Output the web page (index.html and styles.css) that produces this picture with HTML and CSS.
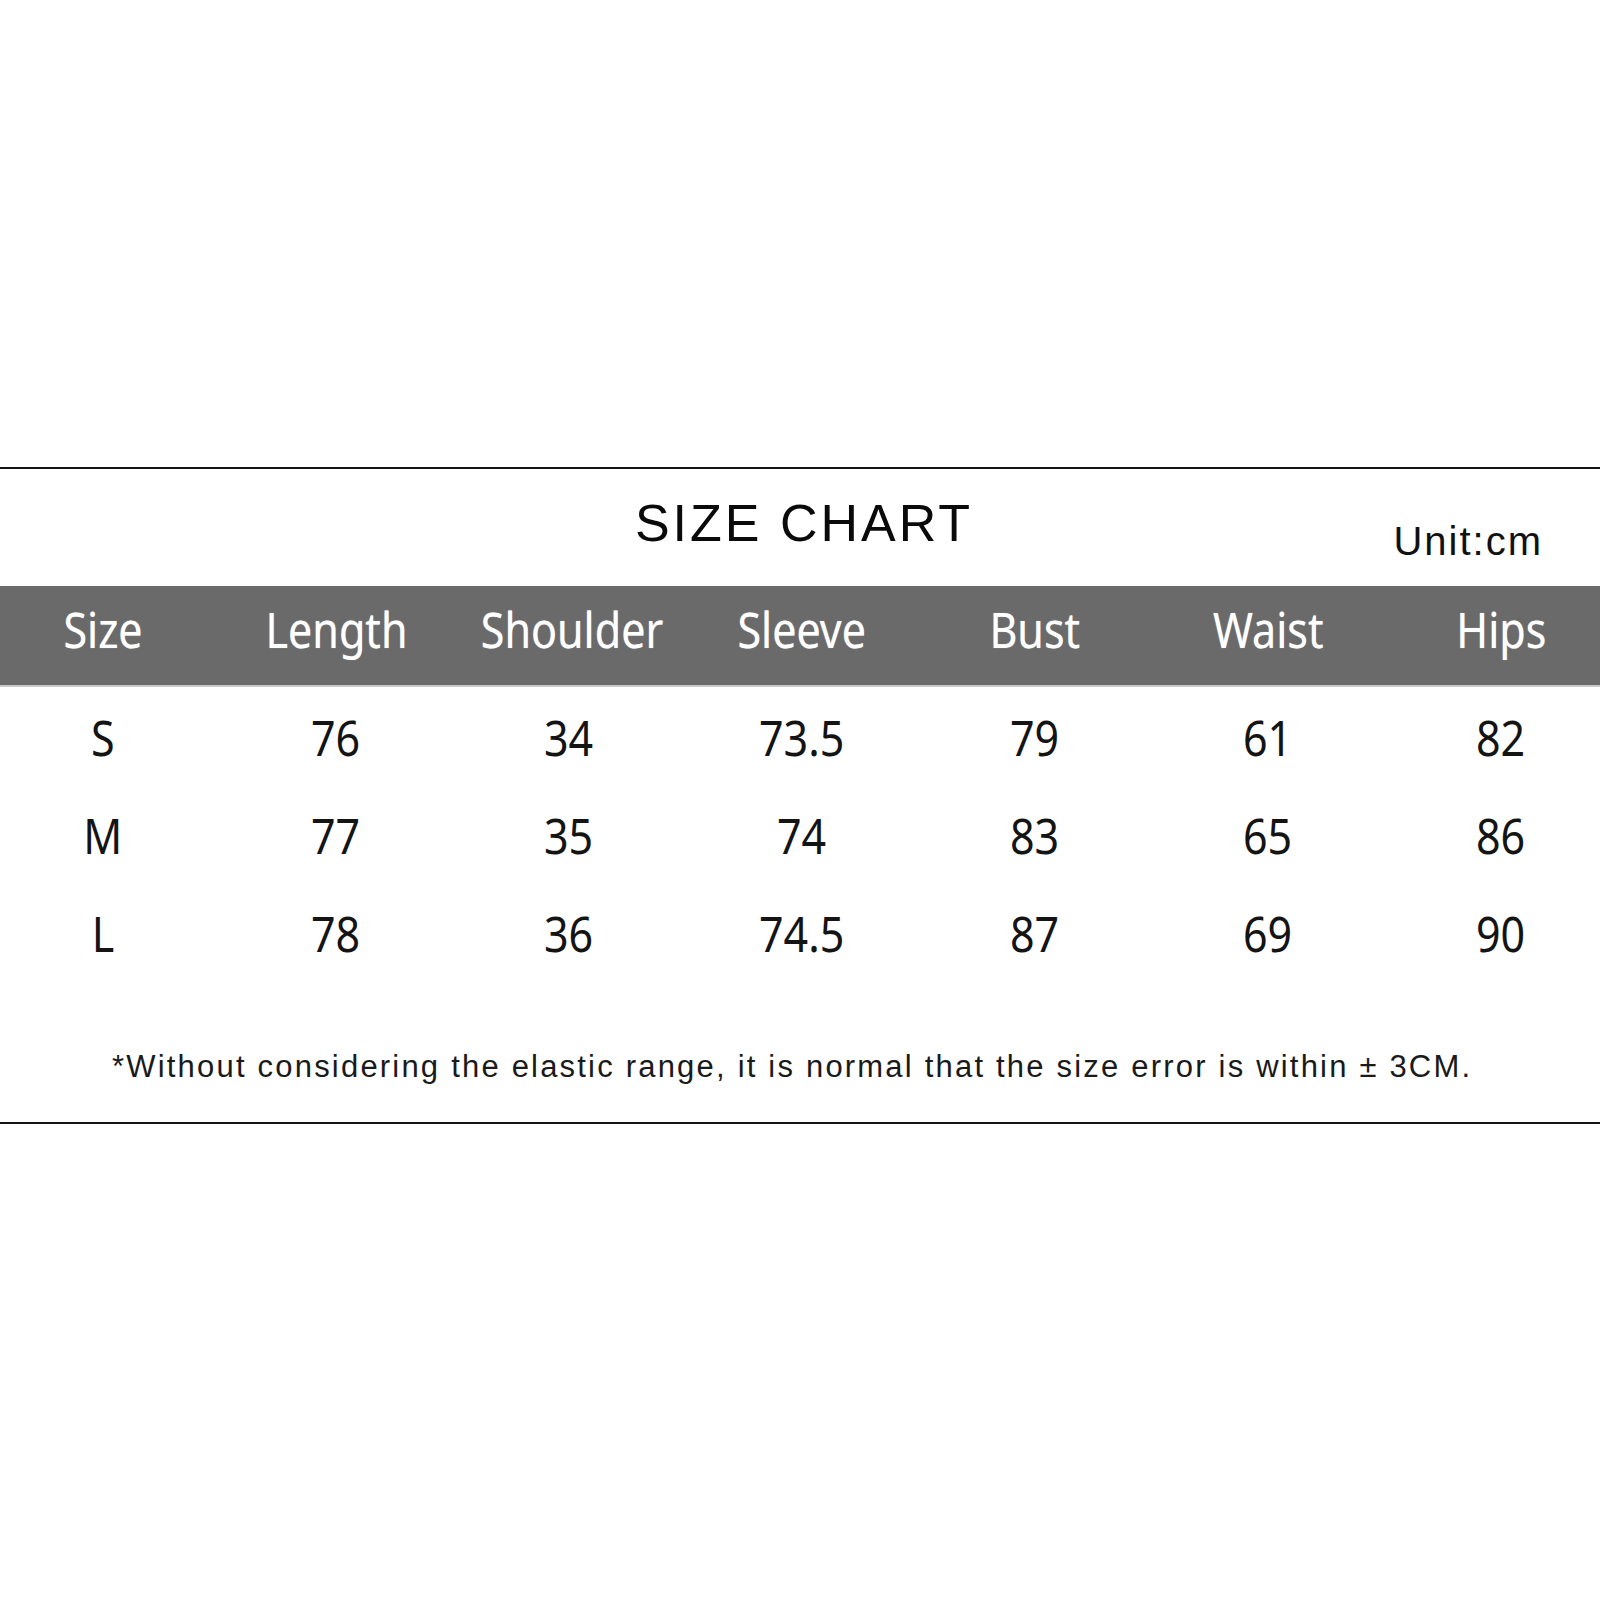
FILE: index.html
```html
<!DOCTYPE html>
<html lang="en">
<head>
<meta charset="utf-8">
<title>Size Chart</title>
<link rel="stylesheet" href="styles.css">
</head>
<body>
<div class="chart">
  <div class="rule"></div>
  <div class="title-row">
    <div></div>
    <h1 class="title">SIZE CHART</h1>
    <div class="unit">Unit:cm</div>
  </div>
  <div class="row head">
    <div class="cell"><span>Size</span></div>
    <div class="cell"><span>Length</span></div>
    <div class="cell"><span>Shoulder</span></div>
    <div class="cell"><span>Sleeve</span></div>
    <div class="cell"><span>Bust</span></div>
    <div class="cell"><span>Waist</span></div>
    <div class="cell"><span>Hips</span></div>
  </div>
  <div class="body">
    <div class="row">
      <div class="cell"><span>S</span></div>
      <div class="cell"><span>76</span></div>
      <div class="cell"><span>34</span></div>
      <div class="cell"><span>73.5</span></div>
      <div class="cell"><span>79</span></div>
      <div class="cell"><span>61</span></div>
      <div class="cell"><span>82</span></div>
    </div>
    <div class="row">
      <div class="cell"><span>M</span></div>
      <div class="cell"><span>77</span></div>
      <div class="cell"><span>35</span></div>
      <div class="cell"><span>74</span></div>
      <div class="cell"><span>83</span></div>
      <div class="cell"><span>65</span></div>
      <div class="cell"><span>86</span></div>
    </div>
    <div class="row">
      <div class="cell"><span>L</span></div>
      <div class="cell"><span>78</span></div>
      <div class="cell"><span>36</span></div>
      <div class="cell"><span>74.5</span></div>
      <div class="cell"><span>87</span></div>
      <div class="cell"><span>69</span></div>
      <div class="cell"><span>90</span></div>
    </div>
  </div>
  <p class="note">*Without considering the elastic range, it is normal that the size error is within ± 3CM.</p>
  <div class="rule"></div>
</div>
</body>
</html>
```

FILE: styles.css
```css
html, body {
  margin: 0;
  padding: 0;
  background: #ffffff;
}

body {
  width: 1600px;
  height: 1600px;
  font-family: "Liberation Sans", Arial, sans-serif;
  color: #111111;
}

.chart {
  padding-top: 467px;
  display: flex;
  flex-direction: column;
}

.rule {
  height: 2px;
  background: #141414;
}

.title-row {
  height: 117px;
  display: grid;
  grid-template-columns: 1fr auto 1fr;
  box-sizing: border-box;
  padding-top: 27px;
}

.title {
  margin: 0;
  font-family: "Liberation Sans", Arial, sans-serif;
  font-weight: 400;
  font-size: 52px;
  line-height: 54px;
  letter-spacing: 3px;
  color: #0a0a0a;
  transform: translateX(4px);
}

.unit {
  justify-self: end;
  margin-top: 24px;
  margin-right: 57px;
  font-size: 40px;
  line-height: 42px;
  letter-spacing: 2px;
  color: #111111;
}

.row {
  display: grid;
  grid-template-columns: repeat(7, 206px);
  column-gap: 27px;
  height: 98px;
  align-items: center;
}

.cell {
  text-align: center;
  font-family: "Noto Sans", "Open Sans", sans-serif;
  font-size: 50px;
  line-height: 60px;
}

.cell span {
  display: inline-block;
  transform: scaleX(0.86);
}

.head {
  height: 101px;
  box-sizing: border-box;
  padding-bottom: 14px;
  background: #6a6a6a;
  border-bottom: 2px solid #c9c9c9;
  color: #ffffff;
}

.head .cell {
  text-shadow: 0 0 1px rgba(255, 255, 255, 0.6);
}

.body {
  padding-top: 1px;
  color: #141414;
}

.note {
  margin: 0;
  height: 140px;
  box-sizing: border-box;
  padding-top: 67px;
  padding-left: 112px;
  font-family: "Liberation Sans", Arial, sans-serif;
  font-size: 31px;
  line-height: 36px;
  letter-spacing: 2.2px;
  color: #1a1a1a;
  white-space: nowrap;
}
```
